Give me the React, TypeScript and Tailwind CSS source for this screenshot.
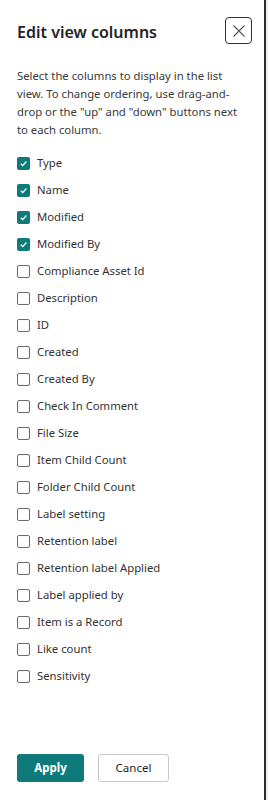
import React from "react";

const items: [string, boolean][] = [
  ["Type", true],
  ["Name", true],
  ["Modified", true],
  ["Modified By", true],
  ["Compliance Asset Id", false],
  ["Description", false],
  ["ID", false],
  ["Created", false],
  ["Created By", false],
  ["Check In Comment", false],
  ["File Size", false],
  ["Item Child Count", false],
  ["Folder Child Count", false],
  ["Label setting", false],
  ["Retention label", false],
  ["Retention label Applied", false],
  ["Label applied by", false],
  ["Item is a Record", false],
  ["Like count", false],
  ["Sensitivity", false],
];

export default function App() {
  return (
    <div className="w-[268px] h-[800px] flex bg-[#f3f3f3]" style={{ fontFamily: '"Noto Sans", "Open Sans", sans-serif' }}>
      <div className="w-[264px] h-full bg-white flex flex-col text-[#323130]">
        <div className="flex items-start justify-between pl-[17px] pr-[12px] pt-[17px]">
          <h1 className="text-[16px] font-semibold leading-[27px] mt-[2px] text-[#242424]">Edit view columns</h1>
          <button className="w-[27px] h-[27px] border border-[#333] rounded-[4px] flex items-center justify-center">
            <svg width="14" height="14" viewBox="0 0 14 14" fill="none" stroke="#555" strokeWidth="1.1">
              <path d="M1.5 1.5 L12.5 12.5 M12.5 1.5 L1.5 12.5" />
            </svg>
          </button>
        </div>
        <p className="pl-[17px] pr-[22px] mt-[21px] text-[11.3px] leading-[18px] text-[#3a3a3a]">
          Select the columns to display in the list view. To change ordering, use drag-and-drop or the "up" and "down" buttons next to each column.
        </p>
        <div className="px-[17px] mt-[11px] flex flex-col">
          {items.map(([label, checked]) => (
            <div key={label} className="flex items-center h-[27px]">
              {checked ? (
                <span className="w-[13px] h-[13px] rounded-[2px] bg-[#0f7a7a] flex items-center justify-center">
                  <svg width="9" height="9" viewBox="0 0 10 10" fill="none" stroke="white" strokeWidth="1.4">
                    <path d="M2 5.2 L4.2 7.3 L8.2 2.8" />
                  </svg>
                </span>
              ) : (
                <span className="w-[13px] h-[13px] rounded-[2px] border border-[#6b6b6b] bg-white" />
              )}
              <span className="ml-[7px] text-[11.3px] text-[#333]">{label}</span>
            </div>
          ))}
        </div>
        <div className="flex-1" />
        <div className="flex gap-[14px] px-[17px] pb-[18px]">
          <button className="w-[67px] h-[28px] rounded-[3px] bg-[#0f7a7a] text-white text-[11.5px] font-bold">Apply</button>
          <button className="w-[71px] h-[28px] rounded-[3px] border border-[#c8c8c8] bg-white text-[#242424] text-[11.5px]">Cancel</button>
        </div>
      </div>
      <div className="w-[2px] h-full bg-[#2b2b2b]" />
      <div className="flex-1 h-full bg-[#f0f0f0]" />
    </div>
  );
}
